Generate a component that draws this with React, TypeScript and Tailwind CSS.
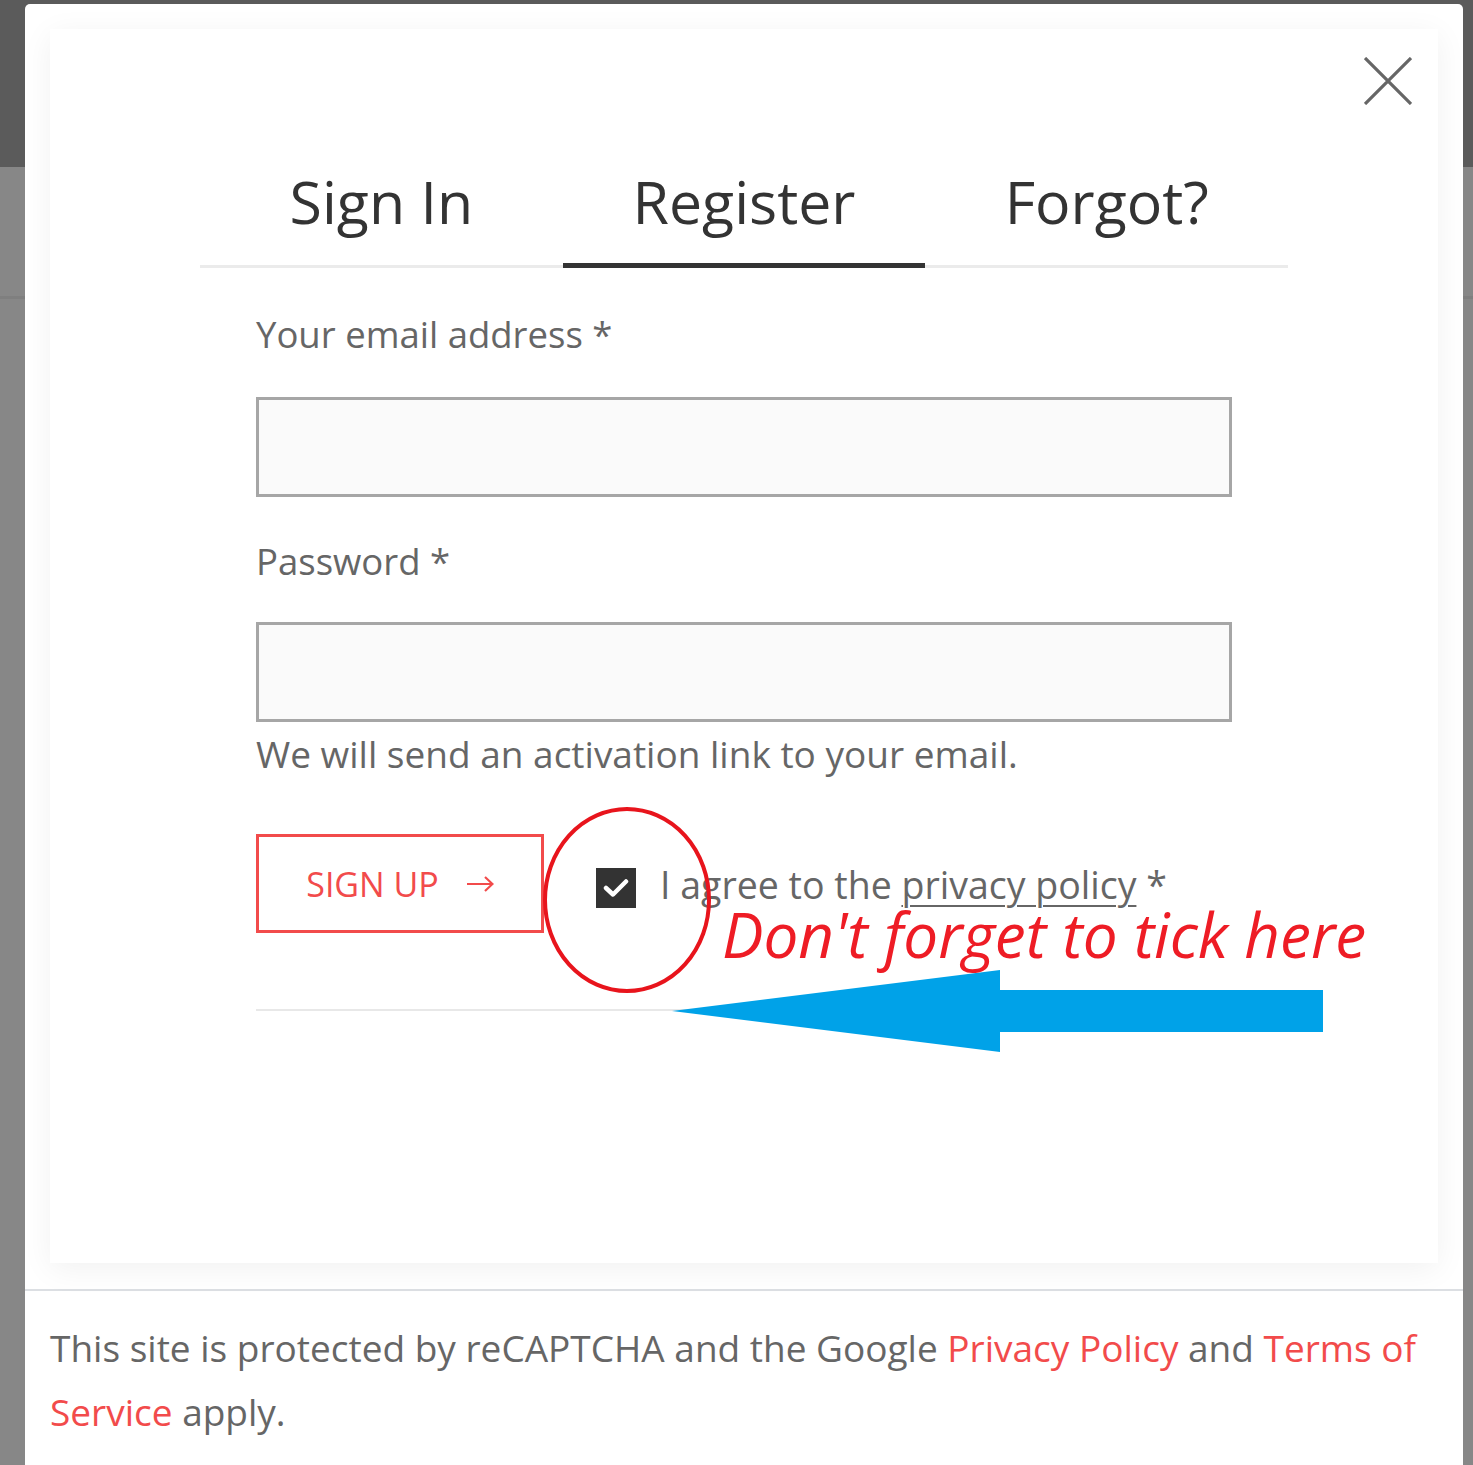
import { useState } from 'react';

const tabs = ['Sign In', 'Register', 'Forgot?'];

function App() {
  const [active, setActive] = useState(1);
  const [agree, setAgree] = useState(true);

  return (
    <div
      className="relative w-full h-[1465px] overflow-hidden pt-[4px] pl-[25px] pr-[10px] bg-[linear-gradient(to_bottom,#5b5b5b_0,#5b5b5b_167px,#878787_167px,#878787_296px,#7f7f7f_296px,#7f7f7f_299px,#878787_299px)]"
      style={{ fontFamily: '"Open Sans", Arial, sans-serif' }}
    >
      {/* Modal */}
      <div className="bg-white rounded-t-[5px] min-h-[1461px]">
        <div className="px-[25px] pt-[25px]">
          {/* Card */}
          <div className="relative bg-white h-[1234px] shadow-[0_6px_30px_rgba(0,0,0,0.06)]">
            <button className="absolute top-[28px] right-[26px] w-[48px] h-[48px] text-[#666]">
              <svg viewBox="0 0 48 48" className="w-full h-full" fill="none" stroke="currentColor" strokeWidth="3.2">
                <path d="M1 1 L47 47 M47 1 L1 47" />
              </svg>
            </button>

            {/* Tabs */}
            <div className="mx-[150px] pt-[143px]">
              <div className="flex border-b-[3px] border-[#ebebeb]">
                {tabs.map((t, i) => (
                  <button
                    key={t}
                    onClick={() => setActive(i)}
                    className={
                      'flex-1 text-center text-[59px] leading-none text-[#333] pb-[32px] border-b-[5px] -mb-[3px] ' +
                      (active === i ? 'border-[#333]' : 'border-transparent')
                    }
                  >
                    {t}
                  </button>
                ))}
              </div>
            </div>

            {/* Form */}
            <div className="mx-[206px] text-[#666]">
              <div className="mt-[48px] text-[36.5px] leading-none">Your email address *</div>
              <input className="block mt-[44px] w-full h-[100px] border-[3px] border-[#a6a6a6] bg-[#fafafa] outline-none" />
              <div className="mt-[46px] text-[36.5px] leading-none">Password *</div>
              <input type="password" className="block mt-[43px] w-full h-[100px] border-[3px] border-[#a6a6a6] bg-[#fafafa] outline-none" />
              <div className="mt-[13px] text-[37px] leading-none">We will send an activation link to your email.</div>

              <div className="mt-[62px] flex items-center">
                <button className="flex items-center justify-center gap-[28px] w-[288px] h-[99px] border-[3px] border-[#f24b4b] text-[#f24b4b] text-[34px] leading-none">
                  <span>SIGN UP</span>
                  <svg width="27" height="16" viewBox="0 0 27 16" fill="none" stroke="currentColor" strokeWidth="2.2">
                    <path d="M0 8 H25 M18 1 L25.5 8 L18 15" />
                  </svg>
                </button>
                <button
                  onClick={() => setAgree(!agree)}
                  className="ml-[52px] mt-[9px] w-[40px] h-[40px] bg-[#333] flex items-center justify-center"
                >
                  {agree && (
                    <svg width="26" height="20" viewBox="0 0 26 20" fill="none" stroke="#fff" strokeWidth="4.5" strokeLinecap="round" strokeLinejoin="round">
                      <path d="M3 10 L10 16.5 L23 3.5" />
                    </svg>
                  )}
                </button>
                <span className="ml-[24px] mt-[3px] text-[37.5px] leading-none">
                  I agree to the <span className="underline underline-offset-[6px] decoration-[2px]">privacy policy</span> *
                </span>
              </div>

              <div className="mt-[76px] h-[2px] bg-[#e8e8e8]" />
            </div>
          </div>
        </div>

        {/* Footer */}
        <div className="mt-[26px] h-[2px] bg-[#dcdfe3]" />
        <p className="px-[25px] pt-[25px] text-[37px] leading-[64px] text-[#666]">
          This site is protected by reCAPTCHA and the Google{' '}
          <a className="text-[#f24b4b]">Privacy Policy</a> and{' '}
          <a className="text-[#f24b4b]">Terms of Service</a> apply.
        </p>
      </div>

      {/* Annotation */}
      <svg className="absolute left-0 top-0 pointer-events-none" width="1473" height="1465">
        <ellipse cx="627" cy="900" rx="82" ry="91" fill="none" stroke="#e8141c" strokeWidth="4" />
        <polygon points="672,1011 1000,970 1000,990 1323,990 1323,1032 1000,1032 1000,1052" fill="#00a2e8" />
      </svg>
      <span
        className="absolute left-[722px] top-[903px] text-[62px] leading-none italic text-[#ee1c25] whitespace-nowrap"
        style={{ fontFamily: '"Open Sans", Arial, sans-serif' }}
      >
        Don't forget to tick here
      </span>
    </div>
  );
}

export default App;
